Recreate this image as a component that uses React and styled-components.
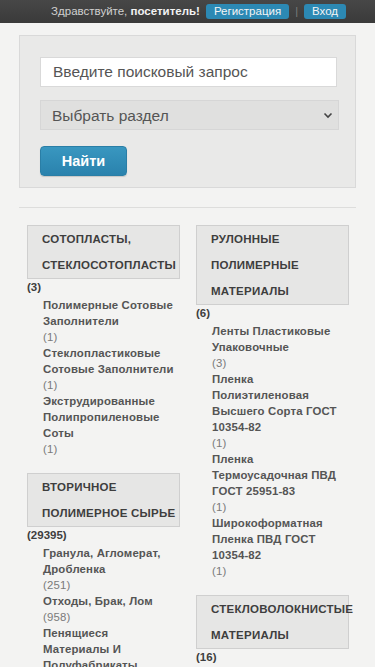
import React from "react";
import styled, { createGlobalStyle } from "styled-components";

const Global = createGlobalStyle`
  html, body { margin: 0; padding: 0; }
  body {
    background: #f3f3f2;
    font-family: "Liberation Sans", Arial, sans-serif;
    color: #444;
  }
  * { box-sizing: border-box; }
`;

const TopBar = styled.div`
  height: 23px;
  background: linear-gradient(#474747, #3a3a3a);
  display: flex;
  align-items: center;
  justify-content: flex-end;
  padding: 0 29px 1px 0;
  gap: 6px;
  font-size: 11.5px;
`;

const Greeting = styled.span`
  color: #d0d0d0;
  b { color: #f2f2f2; font-weight: bold; }
`;

const BarButton = styled.a`
  display: inline-flex;
  align-items: center;
  height: 15px;
  padding: 0 ${(p) => p.$pad || 8}px;
  background: #2c89b4;
  color: #f4f4f4;
  border-radius: 3px;
  font-size: 11.5px;
  text-decoration: none;
`;

const Sep = styled.span`
  color: #7c7c7c;
  font-size: 11px;
`;

const Main = styled.div`
  padding: 12px 19px 0;
`;

const SearchPanel = styled.form`
  background: #e9e9e8;
  border: 1px solid #d9d9d9;
  padding: 21px 16px 11px 20px;
  display: flex;
  flex-direction: column;
  align-items: flex-start;
`;

const Input = styled.input`
  width: 297px;
  height: 30px;
  border: 1px solid #d9d9d9;
  background: #fff;
  padding: 0 12px;
  font-family: inherit;
  font-size: 15.5px;
  color: #555;
  outline: none;
  &::placeholder { color: #555; }
`;

const SelectWrap = styled.div`
  position: relative;
  margin-top: 13px;
`;

const Select = styled.select`
  appearance: none;
  -webkit-appearance: none;
  width: 299px;
  height: 30px;
  border: 1px solid #d6d6d6;
  background: #e0e0df;
  padding: 0 11px;
  font-family: inherit;
  font-size: 15.5px;
  color: #555;
  border-radius: 0;
  outline: none;
`;

const Chevron = styled.svg`
  position: absolute;
  right: 6px;
  top: 12px;
  pointer-events: none;
`;

const FindButton = styled.button`
  margin-top: 16px;
  width: 87px;
  height: 30px;
  border: 1px solid #2a7ea6;
  border-radius: 4px;
  background: linear-gradient(#3997c0, #2a82ad);
  color: #fff;
  font-family: inherit;
  font-weight: bold;
  font-size: 14.5px;
  box-shadow: 0 1px 1px rgba(0,0,0,0.15);
`;

const Rule = styled.hr`
  margin: 19px 0 17px;
  border: 0;
  border-top: 1px solid #dddddc;
`;

const Columns = styled.div`
  display: grid;
  grid-template-columns: 153px 153px;
  column-gap: 16px;
  padding-left: 8px;
  align-items: start;
`;

const Column = styled.div`
  display: flex;
  flex-direction: column;
  gap: 16px;
`;

const Category = styled.div``;

const CatTitle = styled.div`
  background: #e6e6e5;
  border: 1px solid #cfcfcf;
  padding: 0 0 0 14px;
  font-weight: bold;
  font-size: 11.5px;
  letter-spacing: 0.25px;
  line-height: 26px;
  color: #3e3e3e;
  text-transform: uppercase;
  white-space: nowrap;
`;

const CatCount = styled.div`
  font-weight: bold;
  font-size: 11.5px;
  line-height: 16px;
  color: #3e3e3e;
`;

const SubList = styled.ul`
  list-style: none;
  margin: 2px 0 0;
  padding: 0 0 0 16px;
  width: 153px;
`;

const SubItem = styled.li`
  font-size: 11.4px;
  letter-spacing: 0.15px;
  line-height: 16px;
  white-space: nowrap;
`;

const SubName = styled.div`
  font-weight: bold;
  color: #555;
`;

const SubCount = styled.div`
  color: #7a7a7a;
`;

const left = [
  {
    title: ["Сотопласты,", "стеклосотопласты"],
    count: 3,
    items: [
      ["Полимерные Сотовые", "Заполнители", 1],
      ["Стеклопластиковые", "Сотовые Заполнители", 1],
      ["Экструдированные", "Полипропиленовые", "Соты", 1],
    ],
  },
  {
    title: ["Вторичное", "полимерное сырье"],
    count: 29395,
    items: [
      ["Гранула, Агломерат,", "Дробленка", 251],
      ["Отходы, Брак, Лом", 958],
      ["Пенящиеся", "Материалы И", "Полуфабрикаты", 12],
    ],
  },
];

const right = [
  {
    title: ["Рулонные", "полимерные", "материалы"],
    count: 6,
    items: [
      ["Ленты Пластиковые", "Упаковочные", 3],
      ["Пленка", "Полиэтиленовая", "Высшего Сорта ГОСТ", "10354-82", 1],
      ["Пленка", "Термоусадочная ПВД", "ГОСТ 25951-83", 1],
      ["Широкоформатная", "Пленка ПВД ГОСТ", "10354-82", 1],
    ],
  },
  {
    title: ["Стекловолокнистые", "материалы"],
    count: 16,
    items: [],
  },
];

function Lines({ lines }) {
  return lines.map((l, i) => (
    <React.Fragment key={i}>
      {i > 0 && <br />}
      {l}
    </React.Fragment>
  ));
}

function CategoryBlock({ cat }) {
  return (
    <Category>
      <CatTitle>
        <Lines lines={cat.title} />
      </CatTitle>
      <CatCount>({cat.count})</CatCount>
      {cat.items.length > 0 && (
        <SubList>
          {cat.items.map((it, i) => {
            const n = it[it.length - 1];
            const name = it.slice(0, -1);
            return (
              <SubItem key={i}>
                <SubName>
                  <Lines lines={name} />
                </SubName>
                <SubCount>({n})</SubCount>
              </SubItem>
            );
          })}
        </SubList>
      )}
    </Category>
  );
}

export default function App() {
  return (
    <>
      <Global />
      <TopBar>
        <Greeting>
          Здравствуйте, <b>посетитель!</b>
        </Greeting>
        <BarButton href="#" $pad={8}>Регистрация</BarButton>
        <Sep>|</Sep>
        <BarButton href="#" $pad={8}>Вход</BarButton>
      </TopBar>
      <Main>
        <SearchPanel onSubmit={(e) => e.preventDefault()}>
          <Input placeholder="Введите поисковый запрос" />
          <SelectWrap>
            <Select defaultValue="">
              <option value="">Выбрать раздел</option>
            </Select>
            <Chevron width="10" height="7" viewBox="0 0 10 7">
              <path d="M1.5 1.5 L5 5 L8.5 1.5" fill="none" stroke="#444" strokeWidth="1.6" />
            </Chevron>
          </SelectWrap>
          <FindButton type="submit">Найти</FindButton>
        </SearchPanel>
        <Rule />
        <Columns>
          <Column>
            {left.map((c, i) => (
              <CategoryBlock key={i} cat={c} />
            ))}
          </Column>
          <Column>
            {right.map((c, i) => (
              <CategoryBlock key={i} cat={c} />
            ))}
          </Column>
        </Columns>
      </Main>
    </>
  );
}
